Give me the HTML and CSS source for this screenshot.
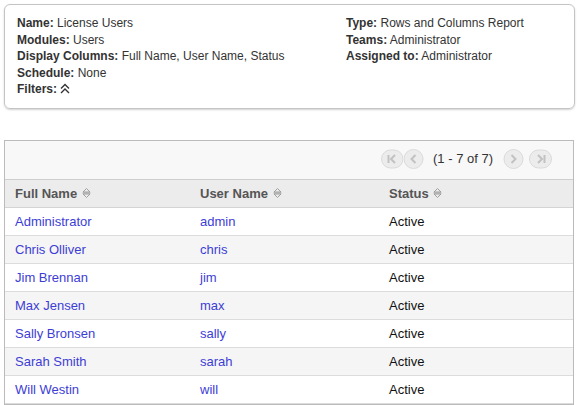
FILE: index.html
```html
<!DOCTYPE html>
<html lang="en">

<head>
    <meta charset="UTF-8">
    <meta name="viewport" content="width=device-width, initial-scale=1.0">
    <title>License Users</title>
    <link rel="stylesheet" href="styles.css">
</head>

<body>
    <div class="report-info">
        <div class="info-col">
            <div class="info-line"><b>Name:</b> License Users</div>
            <div class="info-line"><b>Modules:</b> Users</div>
            <div class="info-line"><b>Display Columns:</b> Full Name, User Name, Status</div>
            <div class="info-line"><b>Schedule:</b> None</div>
            <div class="info-line"><b>Filters:</b>
                <svg class="filters-toggle" width="10" height="11" viewBox="0 0 10 11">
                    <path d="M1 5.5 L5 1.5 L9 5.5 M1 10 L5 6 L9 10" fill="none" stroke="#333" stroke-width="1.4" />
                </svg>
            </div>
        </div>
        <div class="info-col">
            <div class="info-line"><b>Type:</b> Rows and Columns Report</div>
            <div class="info-line"><b>Teams:</b> Administrator</div>
            <div class="info-line"><b>Assigned to:</b> Administrator</div>
        </div>
    </div>

    <div class="list-view">
        <div class="pagination">
            <svg class="page-btn" width="22" height="20" viewBox="0 0 22 20">
                <rect x="0.5" y="1" width="21.5" height="18" rx="9" fill="#ececec" stroke="#dadada" />
                <path d="M7.5 6 V14 M14 6 L10 10 L14 14" fill="none" stroke="#c2c2c2" stroke-width="2" />
            </svg>
            <svg class="page-btn" width="21" height="20" viewBox="0 0 21 20">
                <circle cx="10.5" cy="10" r="9.5" fill="#ececec" stroke="#dadada" />
                <path d="M12.5 6 L8.5 10 L12.5 14" fill="none" stroke="#c2c2c2" stroke-width="2" />
            </svg>
            <span class="page-count">(1 - 7 of 7)</span>
            <svg class="page-btn" width="21" height="20" viewBox="0 0 21 20">
                <circle cx="10.5" cy="10" r="9.5" fill="#ececec" stroke="#dadada" />
                <path d="M8.5 6 L12.5 10 L8.5 14" fill="none" stroke="#c2c2c2" stroke-width="2" />
            </svg>
            <svg class="page-btn last" width="23" height="20" viewBox="0 0 23 20">
                <rect x="0.5" y="1" width="22" height="18" rx="9" fill="#ececec" stroke="#dadada" />
                <path d="M9 6 L13 10 L9 14 M15.5 6 V14" fill="none" stroke="#c2c2c2" stroke-width="2" />
            </svg>
        </div>
        <table class="list-table">
            <thead>
                <tr>
                    <th class="col-name">Full Name <svg class="sort-icon" width="9" height="12" viewBox="0 0 9 12"><path d="M1 5 L4.5 1.5 L8 5 Z M1 7 L4.5 10.5 L8 7 Z M0.5 6 H8.5" fill="none" stroke="#999" stroke-width="0.9" /></svg></th>
                    <th class="col-user">User Name <svg class="sort-icon" width="9" height="12" viewBox="0 0 9 12"><path d="M1 5 L4.5 1.5 L8 5 Z M1 7 L4.5 10.5 L8 7 Z M0.5 6 H8.5" fill="none" stroke="#999" stroke-width="0.9" /></svg></th>
                    <th>Status <svg class="sort-icon" width="9" height="12" viewBox="0 0 9 12"><path d="M1 5 L4.5 1.5 L8 5 Z M1 7 L4.5 10.5 L8 7 Z M0.5 6 H8.5" fill="none" stroke="#999" stroke-width="0.9" /></svg></th>
                </tr>
            </thead>
            <tbody>
                <tr><td><a href="#">Administrator</a></td><td><a href="#">admin</a></td><td>Active</td></tr>
                <tr><td><a href="#">Chris Olliver</a></td><td><a href="#">chris</a></td><td>Active</td></tr>
                <tr><td><a href="#">Jim Brennan</a></td><td><a href="#">jim</a></td><td>Active</td></tr>
                <tr><td><a href="#">Max Jensen</a></td><td><a href="#">max</a></td><td>Active</td></tr>
                <tr><td><a href="#">Sally Bronsen</a></td><td><a href="#">sally</a></td><td>Active</td></tr>
                <tr><td><a href="#">Sarah Smith</a></td><td><a href="#">sarah</a></td><td>Active</td></tr>
                <tr><td><a href="#">Will Westin</a></td><td><a href="#">will</a></td><td>Active</td></tr>
            </tbody>
        </table>
    </div>
</body>

</html>
```

FILE: styles.css
```css
body {
    font-family: 'Liberation Sans', Arial, Helvetica, sans-serif;
    margin: 0;
    padding: 4px;
    background: #fff;
    color: #333;
}

.report-info {
    display: grid;
    grid-template-columns: 329px 1fr;
    padding: 10px 12px 10px 12px;
    border: 1px solid #c4c4c4;
    border-radius: 6px;
    box-shadow: 0 1px 2px rgba(0, 0, 0, 0.18);
    font-size: 12px;
    line-height: 16.5px;
}

.info-line b {
    font-weight: bold;
}

.filters-toggle {
    vertical-align: -1px;
}

.list-view {
    margin-top: 31px;
    border: 1px solid #bbb;
    margin-right: 1px;
}

.pagination {
    box-sizing: border-box;
    display: flex;
    align-items: center;
    justify-content: flex-end;
    height: 39px;
    padding: 0 21px 2px 0;
    background: #f8f8f8;
    border-bottom: 1px solid #cfcfcf;
    font-size: 13px;
}

.page-btn {
    display: block;
}

.page-count {
    margin: 0 10px 0 9px;
    color: #333;
}

.page-btn.last {
    margin-left: 5px;
}

.list-table {
    width: 100%;
    border-collapse: separate;
    border-spacing: 0;
    font-size: 13px;
}

.list-table th {
    text-align: left;
    font-weight: bold;
    color: #555;
    background: #ececec;
    padding: 6px 10px;
    line-height: 15px;
    border-bottom: 1px solid #d4d4d4;
}

.list-table .col-name {
    width: 165px;
}

.list-table .col-user {
    width: 169px;
}

.sort-icon {
    vertical-align: -1px;
    margin-left: 1px;
}

.list-table td {
    padding: 6px 10px;
    line-height: 15px;
    border-bottom: 1px solid #dcdcdc;
    color: #111;
}

.list-table tbody tr:nth-child(even) td {
    background: #f5f5f5;
}

.list-table a {
    color: #3d3dd6;
    text-decoration: none;
}
```
